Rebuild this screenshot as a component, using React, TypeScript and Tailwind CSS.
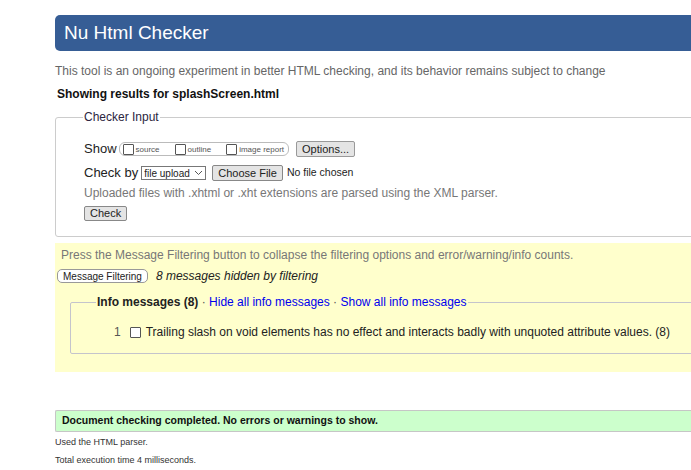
import React from "react";

const Box = () => (
  <span className="inline-block w-[11px] h-[11px] border border-[#555] bg-white rounded-[1px] align-middle" />
);

export default function App() {
  return (
    <div className="w-[691px] h-[470px] overflow-hidden bg-white font-['Liberation_Sans',Arial,sans-serif] text-[#222]">
      <div className="ml-[55px] w-[680px]">
        <div className="mt-[15px] h-[36px] bg-[#365d95] rounded-l-[5px] flex items-center pl-[9px]">
          <h1 className="text-white text-[19px] leading-none -mt-[1px]">Nu Html Checker</h1>
        </div>
        <p className="mt-[13px] text-[12px] leading-[14px] text-[#666]">
          This tool is an ongoing experiment in better HTML checking, and its behavior remains subject to change
        </p>
        <p className="mt-[9px] ml-[2px] text-[12px] leading-[14px] font-bold text-[#111]">
          Showing results for splashScreen.html
        </p>

        <fieldset className="mt-[9px] border border-[#ccc] rounded-[3px] pl-[28px] pb-[14px] h-[127px]">
          <legend className="text-[12px] leading-[14px] text-[#2b2540] px-[1px] -ml-[1px]">Checker Input</legend>
          <div className="mt-[17px] flex items-center h-[16px]">
            <span className="text-[13px] mr-[2px]">Show</span>
            <span className="flex items-center h-[14px] border border-[#bbb] rounded-[6px] pl-[3px] pr-[4px] text-[8px] text-[#555]">
              <Box />
              <span className="ml-[2px] mr-[15px] mt-[2px]">source</span>
              <Box />
              <span className="ml-[2px] mr-[15px] mt-[2px]">outline</span>
              <Box />
              <span className="ml-[2px] mt-[2px]">image report</span>
            </span>
            <span className="ml-[7px] h-[16px] px-[5px] flex items-center text-[11px] bg-[#e4e4e4] border border-[#999] rounded-[2px]">Options...</span>
          </div>
          <div className="mt-[8px] flex items-center h-[16px]">
            <span className="text-[13px] mr-[3px]">Check by</span>
            <span className="h-[14px] w-[65px] flex items-center justify-between border border-[#777] pl-[2px] pr-[2px] text-[10px] bg-white">
              file upload
              <svg width="9" height="6" viewBox="0 0 9 6"><path d="M1 1l3.5 3.5L8 1" fill="none" stroke="#555" strokeWidth="1"/></svg>
            </span>
            <span className="ml-[6px] h-[16px] px-[5px] flex items-center text-[11px] bg-[#e4e4e4] border border-[#888] rounded-[2px]">Choose File</span>
            <span className="ml-[4px] text-[10.5px]">No file chosen</span>
          </div>
          <p className="mt-[5px] text-[12px] leading-[14px] text-[#777]">
            Uploaded files with .xhtml or .xht extensions are parsed using the XML parser.
          </p>
          <div className="mt-[6px] flex">
            <span className="h-[15px] px-[5px] flex items-center text-[11px] bg-[#e4e4e4] border border-[#888] rounded-[2px]">Check</span>
          </div>
        </fieldset>

        <div className="mt-[6px] h-[129px] bg-[#ffffcc] pt-[5px]">
          <p className="ml-[6px] text-[12px] leading-[14px] text-[#777]">
            Press the Message Filtering button to collapse the filtering options and error/warning/info counts.
          </p>
          <div className="mt-[5px] ml-[2px] flex items-center">
            <span className="h-[14px] px-[5px] flex items-center text-[10px] bg-white border border-[#999] rounded-[5px]">Message Filtering</span>
            <span className="ml-[8px] text-[12px] italic text-[#222]">8 messages hidden by filtering</span>
          </div>
          <fieldset className="mt-[10px] ml-[15px] border border-[#c4c4cc] rounded-[2px] pl-[26px] h-[59px]">
            <legend className="text-[12px] leading-[14px] px-[1px] -ml-[1px]">
              <b>Info messages (8)</b>
              <span className="text-[#555]"> · </span>
              <span className="text-[#0000ee]">Hide all info messages</span>
              <span className="text-[#555]"> · </span>
              <span className="text-[#0000ee]">Show all info messages</span>
            </legend>
            <div className="mt-[14px] flex items-center text-[12px]">
              <span className="ml-[17px] text-[#555] mr-[9px]">1</span>
              <Box />
              <span className="ml-[5px] text-[#222]">
                Trailing slash on void elements has no effect and interacts badly with unquoted attribute values. (8)
              </span>
            </div>
          </fieldset>
        </div>

        <div className="mt-[38px] h-[22px] bg-[#ccffcc] border-y border-[#c6c6c6] rounded-l-[2px] border-l flex items-center pl-[6px] text-[10.5px] font-bold text-[#111]">
          Document checking completed. No errors or warnings to show.
        </div>
        <p className="mt-[4px] text-[9px] leading-[12px] text-[#333]">Used the HTML parser.</p>
        <p className="mt-[6px] text-[9px] leading-[12px] text-[#333]">Total execution time 4 milliseconds.</p>
      </div>
    </div>
  );
}
